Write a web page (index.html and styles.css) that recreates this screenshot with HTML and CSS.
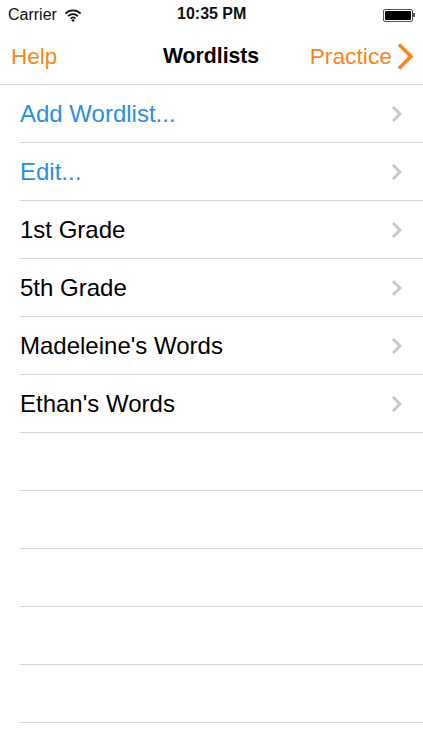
FILE: index.html
```html
<!DOCTYPE html>
<html lang="en">
<head>
    <meta charset="utf-8">
    <title>Wordlists</title>
    <link rel="stylesheet" href="styles.css">
</head>
<body>
    <div class="status">
        <div class="status-left">
            <span>Carrier</span>
            <svg class="wifi" width="18" height="13" viewBox="0 0 16 12">
                <path d="M1 4.2a10 10 0 0 1 14 0M3.4 6.6a6.6 6.6 0 0 1 9.2 0M5.7 8.8a3.3 3.3 0 0 1 4.6 0" fill="none" stroke="#111" stroke-width="1.6"/>
                <path d="M8 12l-1.6-1.7a2.3 2.3 0 0 1 3.2 0z" fill="#111"/>
            </svg>
        </div>
        <div class="status-time">10:35 PM</div>
        <div class="status-right">
            <div class="battery"><div class="battery-fill"></div></div>
            <div class="battery-tip"></div>
        </div>
    </div>
    <div class="nav">
        <div class="nav-btn">Help</div>
        <div class="nav-title">Wordlists</div>
        <div class="nav-btn nav-practice">
            Practice
            <svg width="18" height="28" viewBox="0 0 18 28"><path d="M3 1.5l12 12-12 12" fill="none" stroke="#f5871f" stroke-width="3.6"/></svg>
        </div>
    </div>
    <div class="list">
        <div class="row link"><span class="label">Add Wordlist...</span><svg class="chev" width="12" height="18" viewBox="0 0 12 18"><path d="M2 2l7 7-7 7" fill="none" stroke="#c7c7cc" stroke-width="2.8"/></svg></div>
        <div class="row link"><span class="label">Edit...</span><svg class="chev" width="12" height="18" viewBox="0 0 12 18"><path d="M2 2l7 7-7 7" fill="none" stroke="#c7c7cc" stroke-width="2.8"/></svg></div>
        <div class="row"><span class="label">1st Grade</span><svg class="chev" width="12" height="18" viewBox="0 0 12 18"><path d="M2 2l7 7-7 7" fill="none" stroke="#c7c7cc" stroke-width="2.8"/></svg></div>
        <div class="row"><span class="label">5th Grade</span><svg class="chev" width="12" height="18" viewBox="0 0 12 18"><path d="M2 2l7 7-7 7" fill="none" stroke="#c7c7cc" stroke-width="2.8"/></svg></div>
        <div class="row"><span class="label">Madeleine's Words</span><svg class="chev" width="12" height="18" viewBox="0 0 12 18"><path d="M2 2l7 7-7 7" fill="none" stroke="#c7c7cc" stroke-width="2.8"/></svg></div>
        <div class="row"><span class="label">Ethan's Words</span><svg class="chev" width="12" height="18" viewBox="0 0 12 18"><path d="M2 2l7 7-7 7" fill="none" stroke="#c7c7cc" stroke-width="2.8"/></svg></div>
        <div class="row"></div>
        <div class="row"></div>
        <div class="row"></div>
        <div class="row"></div>
        <div class="row"></div>
        <div class="row"></div>
    </div>
</body>
</html>
```

FILE: styles.css
```css
html, body {
    margin: 0;
    height: 750px;
    overflow: hidden;
    background: #fff;
    font-family: "Liberation Sans", Arial, sans-serif;
    color: #000;
}
.status {
    height: 30px;
    display: flex;
    align-items: center;
    justify-content: space-between;
    padding: 0 8px;
    font-size: 16px;
    position: relative;
    color: #111;
}
.status-left {
    display: flex;
    align-items: center;
    gap: 7px;
}
.status-time {
    font-size: 16px;
    font-weight: bold;
    position: absolute;
    left: 177px;
    top: 5px;
}
.status-right {
    display: flex;
    align-items: center;
}
.battery {
    width: 26px;
    height: 9px;
    border: 1px solid #555;
    border-radius: 2px;
    padding: 1px;
}
.battery-fill {
    height: 100%;
    background: #000;
    border-radius: 1px;
}
.battery-tip {
    width: 2px;
    height: 4px;
    background: #555;
}
.nav {
    height: 54px;
    display: flex;
    align-items: center;
    justify-content: space-between;
    padding: 0 9px 0 11px;
    border-bottom: 1px solid #d4d4d6;
    position: relative;
    background: #fff;
}
.nav-btn {
    font-size: 22.5px;
    color: #f5871f;
    display: flex;
    align-items: center;
    margin-top: -1px;
}
.nav-practice {
    font-size: 22.8px;
    gap: 4px;
}
.nav-title {
    position: absolute;
    left: 163px;
    top: 14px;
    font-size: 21.2px;
    font-weight: bold;
}
.list {
    padding-left: 20px;
}
.row {
    height: 57px;
    border-bottom: 1px solid #d8d8da;
    display: flex;
    align-items: center;
    justify-content: space-between;
    padding-right: 20px;
    font-size: 24px;
}
.label {
    margin-top: 1px;
}
.link {
    color: #2a90dc;
}
```
